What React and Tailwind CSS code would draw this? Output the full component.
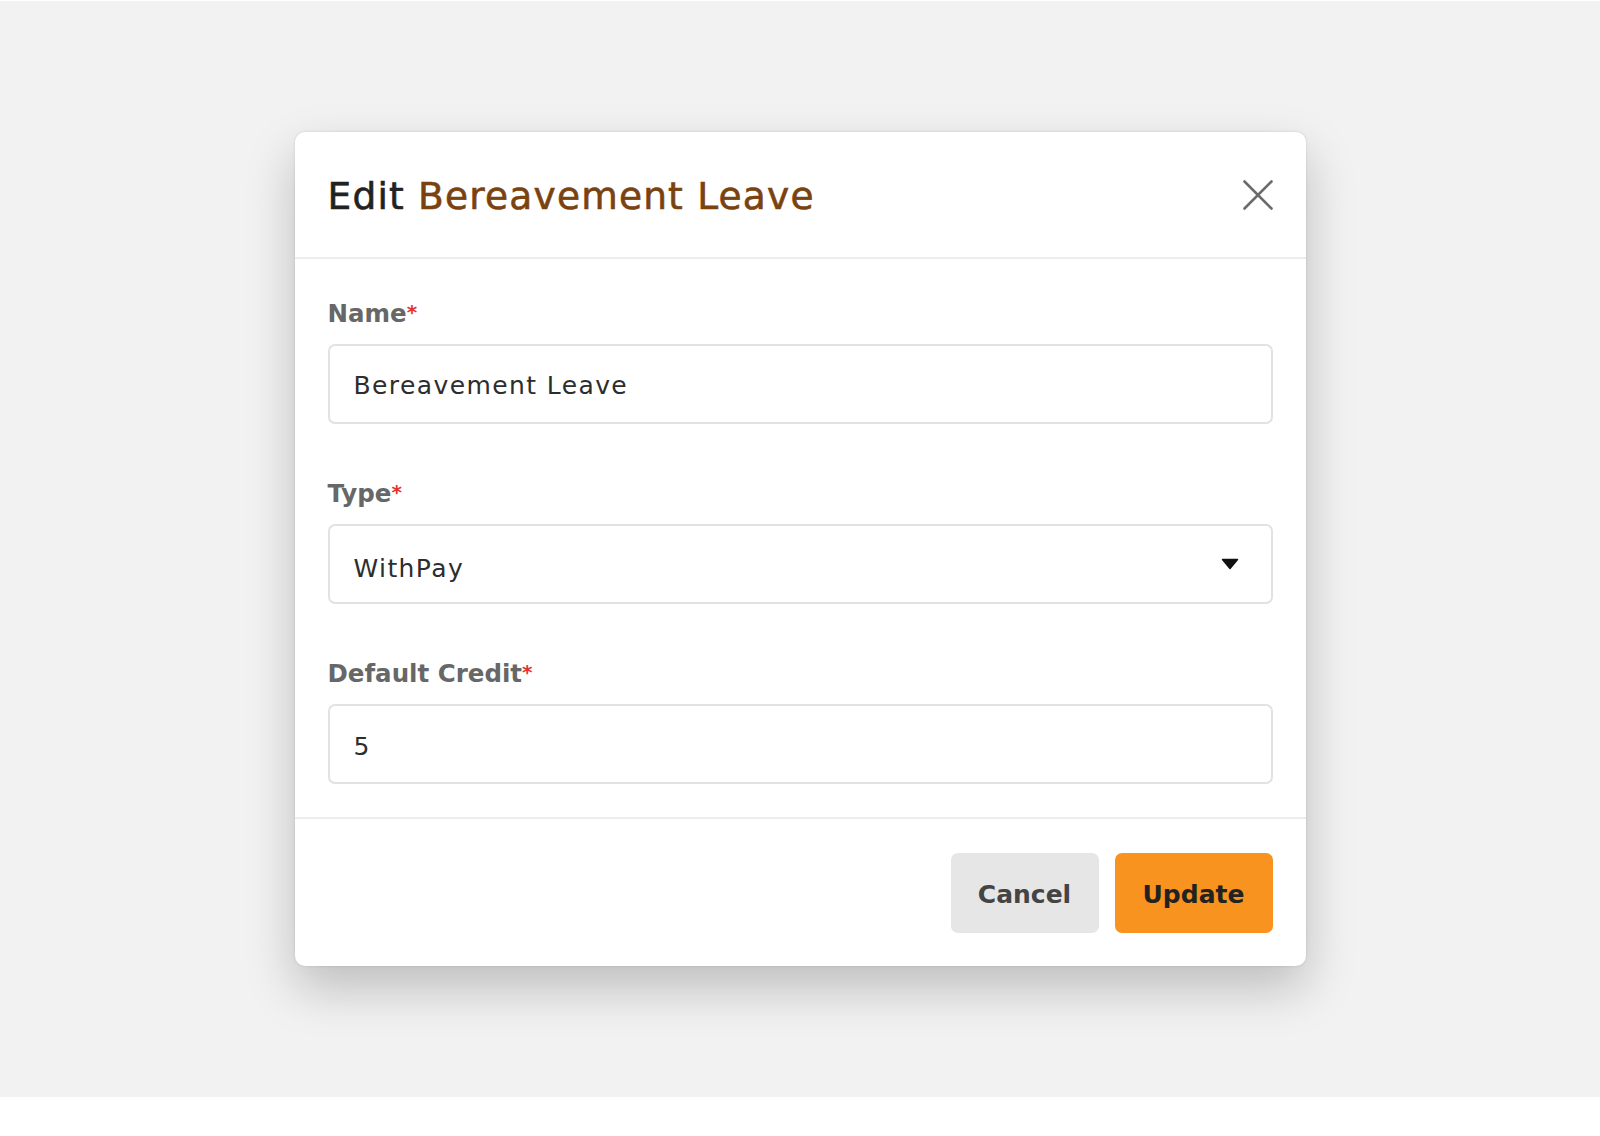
import React, { useState } from 'react';

const FONT = { fontFamily: '"DejaVu Sans", "Noto Sans", sans-serif' };

const Label = ({ children }) => (
  <label className="block text-[24.5px] leading-[30px] font-bold text-[#676767]">
    {children}
    <span className="relative -top-[3px] text-[#e5322d] text-[20px]">*</span>
  </label>
);

const CloseIcon = () => (
  <svg width="30" height="30" viewBox="0 0 30 30" fill="none" stroke="#6b6b6b" strokeWidth="2.6" strokeLinecap="round">
    <line x1="1.5" y1="1.5" x2="28.5" y2="28.5" />
    <line x1="28.5" y1="1.5" x2="1.5" y2="28.5" />
  </svg>
);

const Caret = () => (
  <svg width="18" height="12" viewBox="0 0 18 12">
    <path d="M1.5 1.5 H16.5 L9 10.5 Z" fill="#111" stroke="#111" strokeWidth="1.5" strokeLinejoin="round" />
  </svg>
);

const fieldClass =
  'h-[80px] w-full border-2 border-[#e2e2e2] rounded-[7px] px-[24px] text-[25px] tracking-[1.4px] text-[#2d2d2d] bg-white outline-none';

export default function App() {
  const [name, setName] = useState('Bereavement Leave');
  const [type, setType] = useState('WithPay');
  const [credit, setCredit] = useState('5');

  return (
    <div className="w-full h-[1136px] bg-white pt-px" style={FONT}>
      <div className="h-[1096px] bg-[#f2f2f2] flex items-center justify-center">
        <div className="w-[1011px] bg-white rounded-[10px] shadow-[0_22px_50px_rgba(0,0,0,0.22),0_0_3px_rgba(0,0,0,0.12)]">
          <div className="h-[127px] px-[33px] pt-[4px] flex items-center justify-between border-b-2 border-[#ececec]">
            <h2 className="text-[37.5px] font-normal tracking-[1.2px] [-webkit-text-stroke:0.6px]">
              <span className="text-[#222222]">Edit </span>
              <span className="text-[#7a420e]">Bereavement Leave</span>
            </h2>
            <button type="button" aria-label="Close" className="p-0 -mt-[4px]">
              <CloseIcon />
            </button>
          </div>

          <div className="px-[33px] pt-[40px] pb-[33px] flex flex-col gap-[55px]">
            <div className="flex flex-col gap-[14px]">
              <Label>Name</Label>
              <input value={name} onChange={(e) => setName(e.target.value)} className={`pt-[3px] ${fieldClass}`} />
            </div>
            <div className="flex flex-col gap-[14px]">
              <Label>Type</Label>
              <div className="relative">
                <select
                  value={type}
                  onChange={(e) => setType(e.target.value)}
                  className={`appearance-none pt-[10px] ${fieldClass}`}
                >
                  <option>WithPay</option>
                  <option>WithoutPay</option>
                </select>
                <span className="pointer-events-none absolute right-[34px] top-1/2 -translate-y-1/2 flex">
                  <Caret />
                </span>
              </div>
            </div>
            <div className="flex flex-col gap-[14px]">
              <Label>Default Credit</Label>
              <input value={credit} onChange={(e) => setCredit(e.target.value)} className={`pt-[4px] ${fieldClass}`} />
            </div>
          </div>

          <div className="border-t-2 border-[#ececec] px-[33px] pt-[34px] pb-[33px] flex justify-end gap-[16px]">
            <button type="button" className="h-[80px] w-[148px] pt-[3px] rounded-[7px] bg-[#e6e6e6] text-[25px] font-bold text-[#444444]">
              Cancel
            </button>
            <button type="button" className="h-[80px] w-[158px] pt-[3px] rounded-[7px] bg-[#f7931e] text-[25px] font-bold text-[#222222]">
              Update
            </button>
          </div>
        </div>
      </div>
    </div>
  );
}
